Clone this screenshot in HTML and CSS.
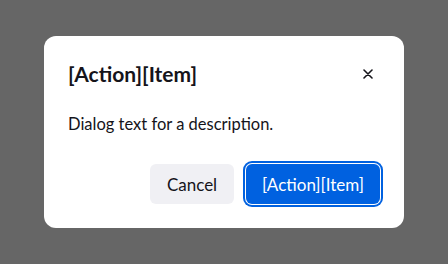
FILE: index.html
```html
<!DOCTYPE html>
<html lang="en">
<head>
    <meta charset="UTF-8">
    <meta name="viewport" content="width=device-width, initial-scale=1.0">
    <title>Dialog</title>
    <link rel="stylesheet" href="styles.css">
</head>
<body>
    <div class="dialog" role="dialog" aria-labelledby="dialog-title">
        <div class="dialog-header">
            <h1 id="dialog-title">[Action][Item]</h1>
            <button class="close-btn" aria-label="Close">
                <svg width="10" height="10" viewBox="0 0 10 10">
                    <path d="M1 1L9 9M9 1L1 9" stroke="#15141a" stroke-width="1.6" stroke-linecap="round"/>
                </svg>
            </button>
        </div>
        <p class="dialog-text">Dialog text for a description.</p>
        <div class="dialog-actions">
            <button class="btn btn-secondary">Cancel</button>
            <button class="btn btn-primary">[Action][Item]</button>
        </div>
    </div>
</body>
</html>
```

FILE: styles.css
```css
* {
    margin: 0;
    padding: 0;
    box-sizing: border-box;
}

body {
    font-family: Lato, "Noto Sans", sans-serif;
    background: #666666;
    min-height: 100vh;
    display: flex;
    align-items: center;
    justify-content: center;
    color: #15141a;
}

.dialog {
    width: 360px;
    padding: 24px;
    background: #ffffff;
    border-radius: 12px;
}

.dialog-header {
    display: flex;
    align-items: center;
    justify-content: space-between;
    height: 28px;
}

h1 {
    font-size: 21px;
    font-weight: 700;
    line-height: 28px;
}

.close-btn {
    width: 24px;
    height: 24px;
    border: none;
    background: none;
    display: flex;
    align-items: center;
    justify-content: center;
    border-radius: 4px;
    cursor: pointer;
}

.dialog-text {
    margin-top: 24px;
    font-size: 16.5px;
    line-height: 24px;
}

.dialog-actions {
    margin-top: 28px;
    display: flex;
    justify-content: flex-end;
    gap: 12px;
}

.btn {
    height: 40px;
    padding: 0 16px;
    border: none;
    border-radius: 6px;
    font-family: inherit;
    font-size: 17px;
    cursor: pointer;
}

.btn-secondary {
    width: 84px;
    background: #f0f0f4;
    color: #15141a;
}

.btn-primary {
    background: #0061e0;
    color: #ffffff;
    box-shadow: 0 0 0 1px #ffffff, 0 0 0 3px #0061e0;
}
```
